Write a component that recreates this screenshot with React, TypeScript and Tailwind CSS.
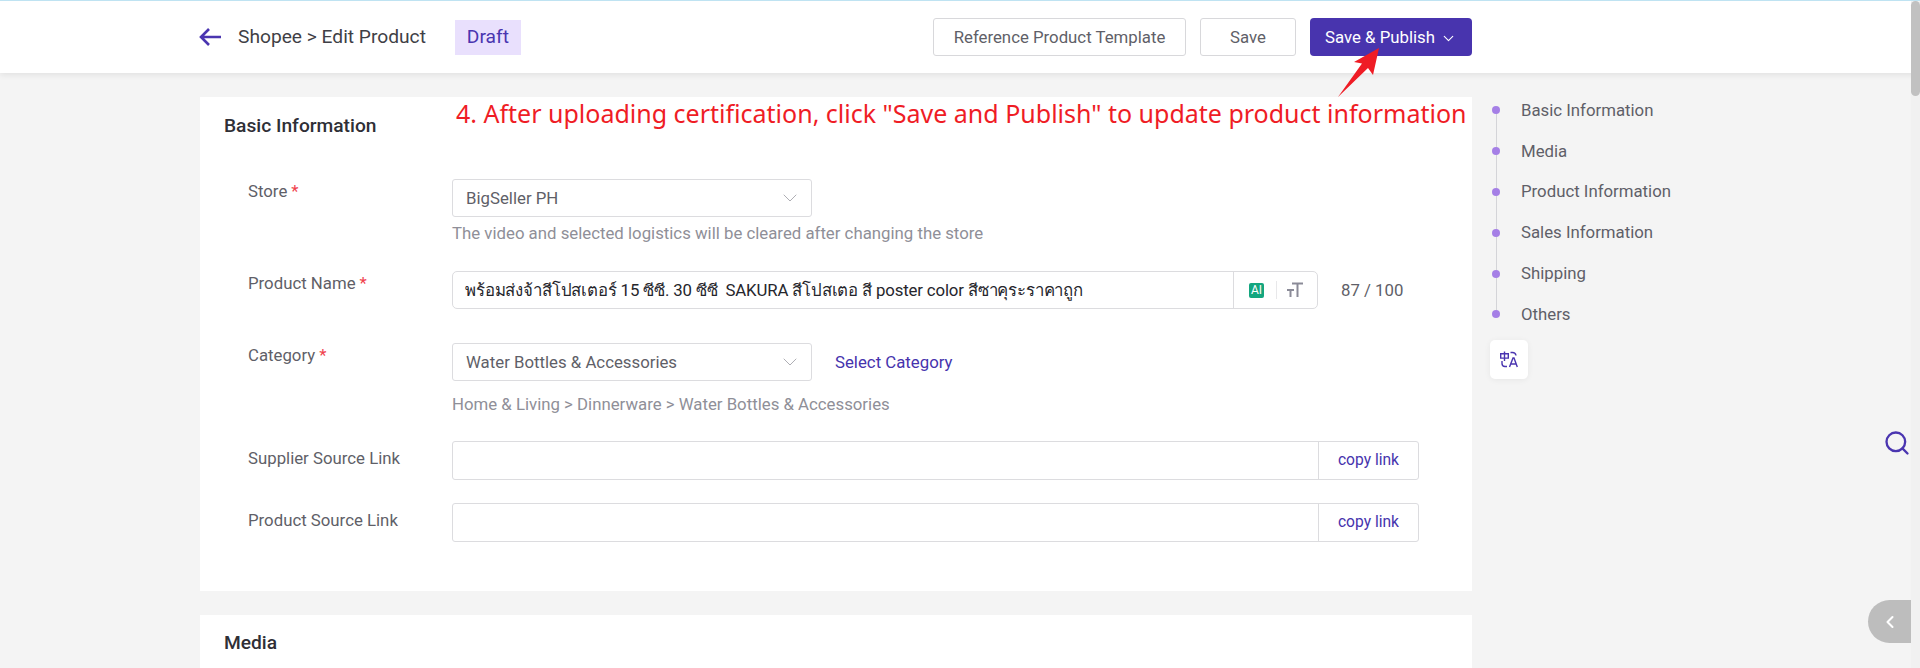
import React from 'react';
import { ChevronDown, ChevronLeft, Search } from 'lucide-react';

const navItems = ['Basic Information', 'Media', 'Product Information', 'Sales Information', 'Shipping', 'Others'];

const Label = ({ text, required }: { text: string; required?: boolean }) => (
  <div className="w-[204px] shrink-0 text-[16.8px] leading-[22px] text-[#5f5f68]">
    {text}
    {required && <span className="ml-1 text-[#f0414d]">*</span>}
  </div>
);

const SelectBox = ({ value }: { value: string }) => (
  <div className="flex h-[38px] w-[360px] items-center justify-between rounded-[3px] border border-[#dcdcdf] pl-[13px] pr-[9px] text-[16.8px] text-[#5f5f68]">
    <span className="pt-[1px]">{value}</span>
    <ChevronDown size={24} strokeWidth={0.9} className="text-[#a5a5ac]" />
  </div>
);

const LinkRow = ({ label }: { label: string }) => (
  <div className="flex">
    <div className="pt-[6px]">
      <Label text={label} />
    </div>
    <div className="flex h-[39px] w-[967px] rounded-[3px] border border-[#dcdcdf]">
      <div className="flex-1" />
      <div className="flex w-[100px] items-center justify-center border-l border-[#dcdcdf] pt-[1px] text-[15.6px] text-[#4633ad]">
        copy link
      </div>
    </div>
  </div>
);

export default function App() {
  return (
    <div className="relative h-[668px] overflow-hidden bg-[#f4f4f4] font-['Roboto',sans-serif]">
      {/* Header */}
      <div className="relative z-10 flex h-[73px] items-center border-t border-[#bfe3f2] bg-white pl-[198px] pr-[448px] shadow-[0_2px_6px_rgba(0,0,0,0.08)]">
        <svg width="24" height="20" viewBox="0 0 24 20" fill="none" className="mr-[16px]">
          <path d="M23 10H3M11 2l-8 8 8 8" stroke="#4a35b0" strokeWidth="2.6" />
        </svg>
        <span className="text-[19.2px] text-[#3f3f46]">Shopee &gt; Edit Product</span>
        <span className="ml-[29px] flex h-[35px] w-[66px] items-center justify-center bg-[#e9e0fd] text-[19.2px] text-[#4a35b0]">
          Draft
        </span>
        <div className="ml-auto flex items-center">
          <button className="h-[38px] w-[253px] rounded-[3px] border border-[#d8d8db] pt-[1px] text-[16.8px] text-[#5f5f68]">
            Reference Product Template
          </button>
          <button className="ml-[14px] h-[38px] w-[96px] rounded-[3px] border border-[#d8d8db] pt-[1px] text-[16.8px] text-[#5f5f68]">
            Save
          </button>
          <button className="ml-[14px] flex h-[38px] w-[162px] items-center justify-center gap-[5px] rounded-[4px] bg-[#4834ae] pt-[1px] text-[16.8px] text-white">
            Save &amp; Publish
            <ChevronDown size={17} strokeWidth={1.6} className="mt-[2px]" />
          </button>
        </div>
      </div>

      <div className="flex pl-[200px] pt-[24px]">
        <div className="w-[1272px] shrink-0">
          {/* Basic Information */}
          <div className="h-[494px] bg-white pl-[24px] pr-[53px] pt-[17px]">
            <h2 className="text-[19.2px] font-medium leading-[24px] text-[#2f2f36]">Basic Information</h2>
            <div className="pl-[24px] pt-[41px]">
              <div className="flex">
                <div className="pt-[1px]">
                  <Label text="Store" required />
                </div>
                <div>
                  <SelectBox value="BigSeller PH" />
                  <div className="mt-[5px] text-[16.8px] leading-[22px] text-[#8f8f98]">
                    The video and selected logistics will be cleared after changing the store
                  </div>
                </div>
              </div>

              <div className="mt-[27px] flex">
                <div className="pt-[1px]">
                  <Label text="Product Name" required />
                </div>
                <div className="flex h-[38px] w-[866px] items-center rounded-[5px] border border-[#dcdcdf]">
                  <div className="flex-1 truncate pl-[12px] pt-[2px] text-[16.8px] tracking-[-0.15px] text-[#26262c]">
                    พร้อมส่งจ้าสีโปสเตอร์ 15 ซีซี. 30 ซีซี&nbsp; SAKURA สีโปสเตอ สี poster color สีซาคุระราคาถูก
                  </div>
                  <div className="flex h-full w-[84px] items-center border-l border-[#dcdcdf] pl-[15px]">
                    <span className="flex h-[15px] w-[15px] items-center justify-center rounded-[2px] bg-[#14a67f] text-[12px] leading-none text-white">
                      AI
                    </span>
                    <span className="ml-[12px] h-[18px] w-px bg-[#e8e8ea]" />
                    <svg width="18" height="16" viewBox="0 0 18 16" fill="none" className="ml-[9px]">
                      <path d="M6 1.5h11M11.5 1.5V15" stroke="#8b8b98" strokeWidth="2" />
                      <path d="M1 8h7M4.5 8v7" stroke="#8b8b98" strokeWidth="2" />
                    </svg>
                  </div>
                </div>
                <div className="ml-[23px] self-center pt-[1px] text-[16.8px] text-[#5f5f68]">87 / 100</div>
              </div>

              <div className="mt-[34px] flex">
                <div className="pt-[1px]">
                  <Label text="Category" required />
                </div>
                <div>
                  <div className="flex items-center">
                    <SelectBox value="Water Bottles & Accessories" />
                    <span className="ml-[23px] pt-[1px] text-[16.8px] text-[#4633ad]">Select Category</span>
                  </div>
                  <div className="mt-[12px] text-[16.8px] leading-[22px] text-[#8f8f98]">
                    Home &amp; Living &gt; Dinnerware &gt; Water Bottles &amp; Accessories
                  </div>
                </div>
              </div>

              <div className="mt-[26px]">
                <LinkRow label="Supplier Source Link" />
              </div>
              <div className="mt-[23px]">
                <LinkRow label="Product Source Link" />
              </div>
            </div>
          </div>

          {/* Media */}
          <div className="mt-[24px] h-[200px] bg-white pl-[24px] pt-[16px]">
            <h2 className="text-[19.2px] font-medium leading-[24px] text-[#2f2f36]">Media</h2>
          </div>
        </div>

        {/* Section nav */}
        <div className="-mt-[7px] ml-[20px]">
          <div className="relative">
            <div className="absolute bottom-[20px] left-[4px] top-[20px] w-px bg-[#d4d4d8]" />
            {navItems.map((item) => (
              <div key={item} className="relative flex h-[40.8px] items-center text-[16.8px] text-[#5f5f68]">
                <span className="h-2 w-2 rounded-full bg-[#a57fe6]" />
                <span className="ml-[21px]">{item}</span>
              </div>
            ))}
          </div>
          <div className="-ml-[2px] mt-[5px] flex h-[39px] w-[38px] items-center justify-center rounded-[5px] bg-white shadow-[0_1px_6px_rgba(0,0,0,0.06)]">
            <svg width="18" height="18" viewBox="0 0 18 18" fill="none" stroke="#4a35b0" strokeWidth="1.4">
              <path d="M0.7 3.7h7.6v4.4H0.7zM4.5 1.5V11" />
              <path d="M10.5 2.5h2q3 0 3.5 3M2 11v2.5q0 3 3 3h2" />
              <path d="M9.5 17L13 8h1l3.3 9M11 14h5" />
            </svg>
          </div>
        </div>
      </div>

      {/* Annotation over the page */}
      <div className="absolute left-[456px] top-[94px] z-20 whitespace-nowrap font-['Noto_Sans',sans-serif] text-[25px] leading-[38px] text-[#ef1c25]">
        4. After uploading certification, click "Save and Publish" to update product information
      </div>
      <svg width="60" height="60" viewBox="0 0 60 60" className="absolute left-[1330px] top-[45px] z-30">
        <path d="M8 52L32 18.5 24 17 49 3 43 30 38 23Z" fill="#ef1c25" />
      </svg>

      {/* Floating tools */}
      <Search size={28} strokeWidth={2} className="absolute left-[1883px] top-[429px] text-[#4a35b0]" />
      <div className="absolute left-[1868px] top-[600px] flex h-[43px] w-[43px] items-center justify-center rounded-l-[22px] bg-[#bdbdbd]">
        <ChevronLeft size={20} strokeWidth={2.5} className="text-white" />
      </div>

      {/* Scrollbar */}
      <div className="absolute bottom-0 right-0 top-[1px] z-30 w-[9px] bg-[#f1f1f1]">
        <div className="h-[95px] rounded-[5px] bg-[#c1c1c1]" />
      </div>
    </div>
  );
}
